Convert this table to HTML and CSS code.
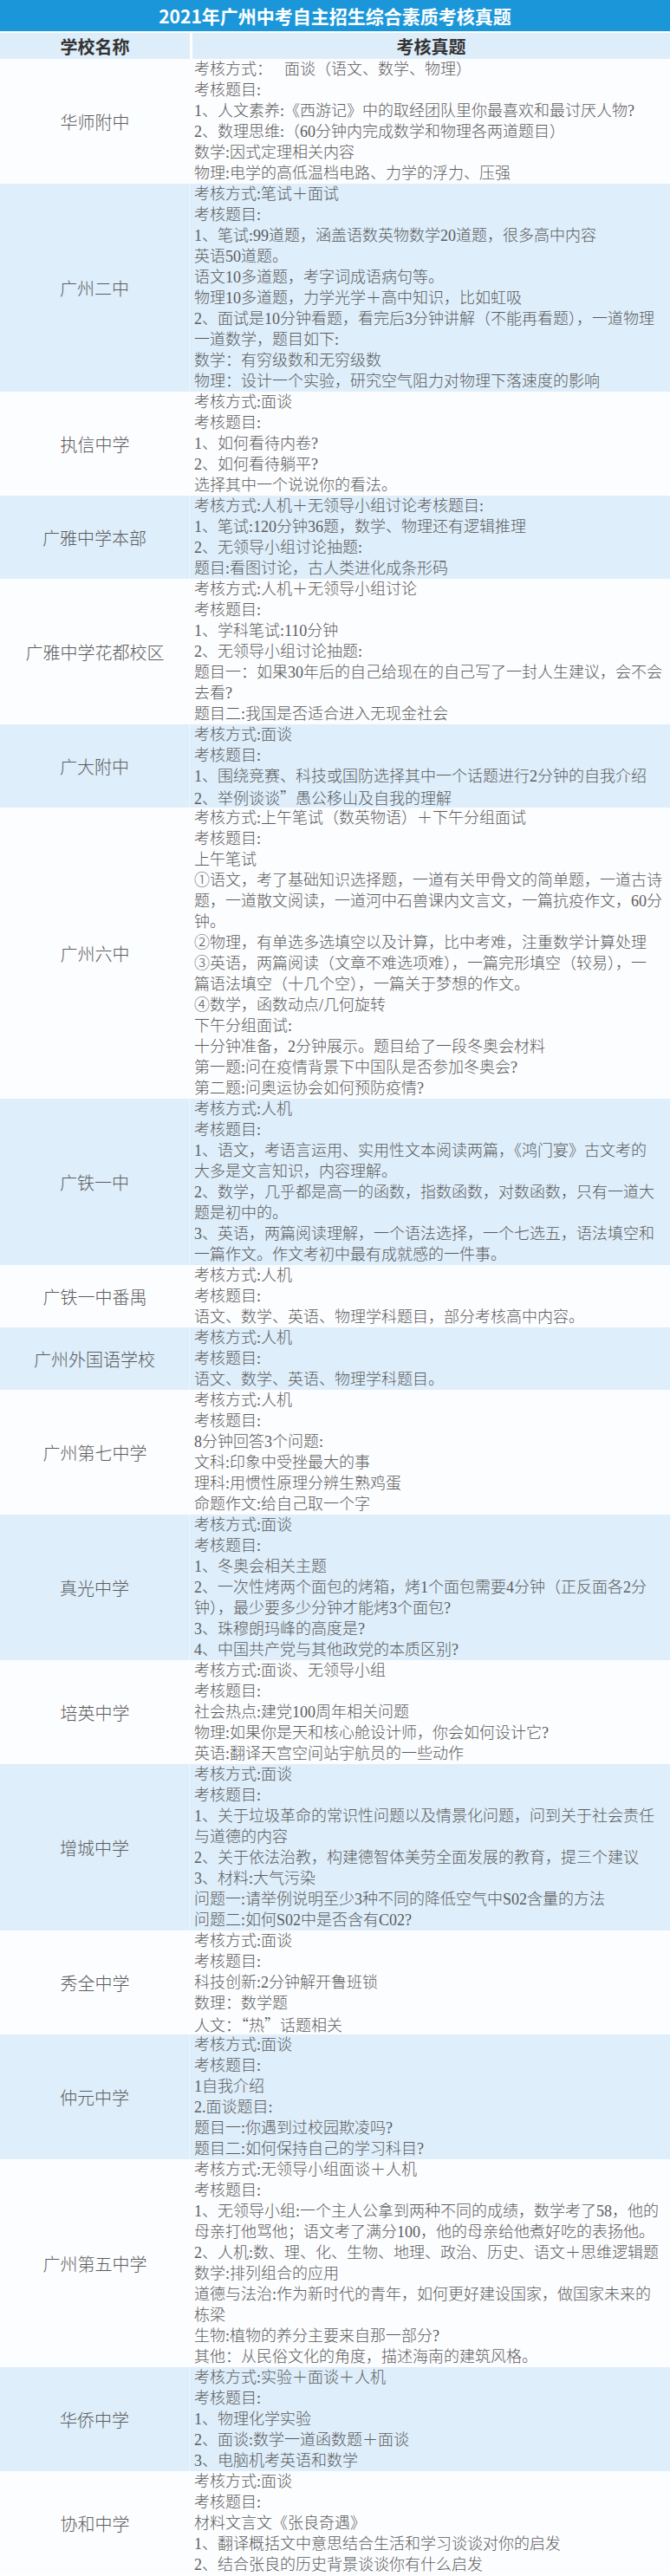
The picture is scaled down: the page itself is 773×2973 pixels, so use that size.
FILE: index.html
```html
<!DOCTYPE html>
<html lang="zh-CN">
<head>
<meta charset="utf-8">
<title>2021年广州中考自主招生综合素质考核真题</title>
<link rel="stylesheet" href="styles.css">
</head>
<body>
<div class="sheet">
  <div class="title">2021年广州中考自主招生综合素质考核真题</div>
  <div class="head">
    <div class="hcell">学校名称</div>
    <div class="hcell">考核真题</div>
  </div>

  <div class="row light">
    <div class="name">华师附中</div>
    <div class="content">
      <div>考核方式：<span class="gap"></span>面谈（语文、数学、物理）</div>
      <div>考核题目:</div>
      <div>1、人文素养:《西游记》中的取经团队里你最喜欢和最讨厌人物?</div>
      <div>2、数理思维:（60分钟内完成数学和物理各两道题目）</div>
      <div>数学:因式定理相关内容</div>
      <div>物理:电学的高低温档电路、力学的浮力、压强</div>
    </div>
  </div>

  <div class="row blue">
    <div class="name">广州二中</div>
    <div class="content">
      <div>考核方式:笔试＋面试</div>
      <div>考核题目:</div>
      <div>1、笔试:99道题，涵盖语数英物数学20道题，很多高中内容</div>
      <div>英语50道题。</div>
      <div>语文10多道题，考字词成语病句等。</div>
      <div>物理10多道题，力学光学＋高中知识，比如虹吸</div>
      <div>2、面试是10分钟看题，看完后3分钟讲解（不能再看题），一道物理</div>
      <div>一道数学，题目如下:</div>
      <div>数学：有穷级数和无穷级数</div>
      <div>物理：设计一个实验，研究空气阻力对物理下落速度的影响</div>
    </div>
  </div>

  <div class="row light">
    <div class="name">执信中学</div>
    <div class="content">
      <div>考核方式:面谈</div>
      <div>考核题目:</div>
      <div>1、如何看待内卷?</div>
      <div>2、如何看待躺平?</div>
      <div>选择其中一个说说你的看法。</div>
    </div>
  </div>

  <div class="row blue">
    <div class="name">广雅中学本部</div>
    <div class="content">
      <div>考核方式:人机＋无领导小组讨论考核题目:</div>
      <div>1、笔试:120分钟36题，数学、物理还有逻辑推理</div>
      <div>2、无领导小组讨论抽题:</div>
      <div>题目:看图讨论，古人类进化成条形码</div>
    </div>
  </div>

  <div class="row light">
    <div class="name">广雅中学花都校区</div>
    <div class="content">
      <div>考核方式:人机＋无领导小组讨论</div>
      <div>考核题目:</div>
      <div>1、学科笔试:110分钟</div>
      <div>2、无领导小组讨论抽题:</div>
      <div>题目一：如果30年后的自己给现在的自己写了一封人生建议，会不会</div>
      <div>去看?</div>
      <div>题目二:我国是否适合进入无现金社会</div>
    </div>
  </div>

  <div class="row blue">
    <div class="name">广大附中</div>
    <div class="content">
      <div>考核方式:面谈</div>
      <div>考核题目:</div>
      <div>1、围绕竞赛、科技或国防选择其中一个话题进行2分钟的自我介绍</div>
      <div>2、举例谈谈<span class="cjk">”</span>愚公移山及自我的理解</div>
    </div>
  </div>

  <div class="row light">
    <div class="name">广州六中</div>
    <div class="content">
      <div>考核方式:上午笔试（数英物语）＋下午分组面试</div>
      <div>考核题目:</div>
      <div>上午笔试</div>
      <div>①语文，考了基础知识选择题，一道有关甲骨文的简单题，一道古诗</div>
      <div>题，一道散文阅读，一道河中石兽课内文言文，一篇抗疫作文，60分</div>
      <div>钟。</div>
      <div>②物理，有单选多选填空以及计算，比中考难，注重数学计算处理</div>
      <div>③英语，两篇阅读（文章不难选项难），一篇完形填空（较易），一</div>
      <div>篇语法填空（十几个空），一篇关于梦想的作文。</div>
      <div>④数学，函数动点/几何旋转</div>
      <div>下午分组面试:</div>
      <div>十分钟准备，2分钟展示。题目给了一段冬奥会材料</div>
      <div>第一题:问在疫情背景下中国队是否参加冬奥会?</div>
      <div>第二题:问奥运协会如何预防疫情?</div>
    </div>
  </div>

  <div class="row blue">
    <div class="name">广铁一中</div>
    <div class="content">
      <div>考核方式:人机</div>
      <div>考核题目:</div>
      <div>1、语文，考语言运用、实用性文本阅读两篇，《鸿门宴》古文考的</div>
      <div>大多是文言知识，内容理解。</div>
      <div>2、数学，几乎都是高一的函数，指数函数，对数函数，只有一道大</div>
      <div>题是初中的。</div>
      <div>3、英语，两篇阅读理解，一个语法选择，一个七选五，语法填空和</div>
      <div>一篇作文。作文考初中最有成就感的一件事。</div>
    </div>
  </div>

  <div class="row light">
    <div class="name">广铁一中番禺</div>
    <div class="content">
      <div>考核方式:人机</div>
      <div>考核题目:</div>
      <div>语文、数学、英语、物理学科题目，部分考核高中内容。</div>
    </div>
  </div>

  <div class="row blue">
    <div class="name">广州外国语学校</div>
    <div class="content">
      <div>考核方式:人机</div>
      <div>考核题目:</div>
      <div>语文、数学、英语、物理学科题目。</div>
    </div>
  </div>

  <div class="row light">
    <div class="name">广州第七中学</div>
    <div class="content">
      <div>考核方式:人机</div>
      <div>考核题目:</div>
      <div>8分钟回答3个问题:</div>
      <div>文科:印象中受挫最大的事</div>
      <div>理科:用惯性原理分辨生熟鸡蛋</div>
      <div>命题作文:给自己取一个字</div>
    </div>
  </div>

  <div class="row blue">
    <div class="name">真光中学</div>
    <div class="content">
      <div>考核方式:面谈</div>
      <div>考核题目:</div>
      <div>1、冬奥会相关主题</div>
      <div>2、一次性烤两个面包的烤箱，烤1个面包需要4分钟（正反面各2分</div>
      <div>钟），最少要多少分钟才能烤3个面包?</div>
      <div>3、珠穆朗玛峰的高度是?</div>
      <div>4、中国共产党与其他政党的本质区别?</div>
    </div>
  </div>

  <div class="row light">
    <div class="name">培英中学</div>
    <div class="content">
      <div>考核方式:面谈、无领导小组</div>
      <div>考核题目:</div>
      <div>社会热点:建党100周年相关问题</div>
      <div>物理:如果你是天和核心舱设计师，你会如何设计它?</div>
      <div>英语:翻译天宫空间站宇航员的一些动作</div>
    </div>
  </div>

  <div class="row blue">
    <div class="name">增城中学</div>
    <div class="content">
      <div>考核方式:面谈</div>
      <div>考核题目:</div>
      <div>1、关于垃圾革命的常识性问题以及情景化问题，问到关于社会责任</div>
      <div>与道德的内容</div>
      <div>2、关于依法治教，构建德智体美劳全面发展的教育，提三个建议</div>
      <div>3、材料:大气污染</div>
      <div>问题一:请举例说明至少3种不同的降低空气中S02含量的方法</div>
      <div>问题二:如何S02中是否含有C02?</div>
    </div>
  </div>

  <div class="row light">
    <div class="name">秀全中学</div>
    <div class="content">
      <div>考核方式:面谈</div>
      <div>考核题目:</div>
      <div>科技创新:2分钟解开鲁班锁</div>
      <div>数理：数学题</div>
      <div>人文：<span class="cjk">“热”</span>话题相关</div>
    </div>
  </div>

  <div class="row blue">
    <div class="name">仲元中学</div>
    <div class="content">
      <div>考核方式:面谈</div>
      <div>考核题目:</div>
      <div>1自我介绍</div>
      <div>2.面谈题目:</div>
      <div>题目一:你遇到过校园欺凌吗?</div>
      <div>题目二:如何保持自己的学习科目?</div>
    </div>
  </div>

  <div class="row light">
    <div class="name">广州第五中学</div>
    <div class="content">
      <div>考核方式:无领导小组面谈＋人机</div>
      <div>考核题目:</div>
      <div>1、无领导小组:一个主人公拿到两种不同的成绩，数学考了58，他的</div>
      <div>母亲打他骂他；语文考了满分100，他的母亲给他煮好吃的表扬他。</div>
      <div>2、人机:数、理、化、生物、地理、政治、历史、语文＋思维逻辑题</div>
      <div>数学:排列组合的应用</div>
      <div>道德与法治:作为新时代的青年，如何更好建设国家，做国家未来的</div>
      <div>栋梁</div>
      <div>生物:植物的养分主要来自那一部分?</div>
      <div>其他：从民俗文化的角度，描述海南的建筑风格。</div>
    </div>
  </div>

  <div class="row blue">
    <div class="name">华侨中学</div>
    <div class="content">
      <div>考核方式:实验＋面谈＋人机</div>
      <div>考核题目:</div>
      <div>1、物理化学实验</div>
      <div>2、面谈:数学一道函数题＋面谈</div>
      <div>3、电脑机考英语和数学</div>
    </div>
  </div>

  <div class="row light">
    <div class="name">协和中学</div>
    <div class="content">
      <div>考核方式:面谈</div>
      <div>考核题目:</div>
      <div>材料文言文《张良奇遇》</div>
      <div>1、翻译概括文中意思结合生活和学习谈谈对你的启发</div>
      <div>2、结合张良的历史背景谈谈你有什么启发</div>
    </div>
  </div>
</div>
</body>
</html>
```
FILE: styles.css
```css
html, body {
  margin: 0;
  padding: 0;
  background: #ffffff;
}

body {
  font-family: "Liberation Serif", "Noto Sans CJK SC", serif;
  color: #5c5c5c;
}

.sheet {
  width: 773px;
  overflow: hidden;
}

.title {
  height: 36px;
  line-height: 36px;
  background: #1b97d9;
  color: #ffffff;
  text-align: center;
  font-family: "Noto Sans CJK SC", sans-serif;
  font-weight: 700;
  font-size: 21px;
  margin-bottom: 2px;
}

.head {
  display: grid;
  grid-template-columns: 219px 1fr;
  column-gap: 3px;
  height: 30px;
}

.hcell {
  background: #ddedf9;
  display: flex;
  align-items: center;
  justify-content: center;
  font-family: "Noto Sans CJK SC", sans-serif;
  font-weight: 700;
  font-size: 20px;
  color: #333333;
}

.row {
  display: grid;
  grid-template-columns: 219px 1fr;
}

.row.blue {
  background: #deeefb;
}

.row.light {
  background: #fcfdff;
}

.row.blue .name {
  border-right: 1px solid #eef6fd;
}

.name {
  display: flex;
  align-items: center;
  justify-content: center;
  font-family: "Noto Sans CJK SC", sans-serif;
  font-weight: 300;
  font-size: 20px;
  color: #5c5c5c;
}

.content {
  padding-left: 5px;
  font-size: 18px;
  line-height: 24px;
  font-weight: 300;
  white-space: nowrap;
}

.content > div {
  height: 24px;
}

.gap {
  display: inline-block;
  width: 14px;
}

.cjk {
  font-family: "Noto Sans CJK SC", sans-serif;
}
```
